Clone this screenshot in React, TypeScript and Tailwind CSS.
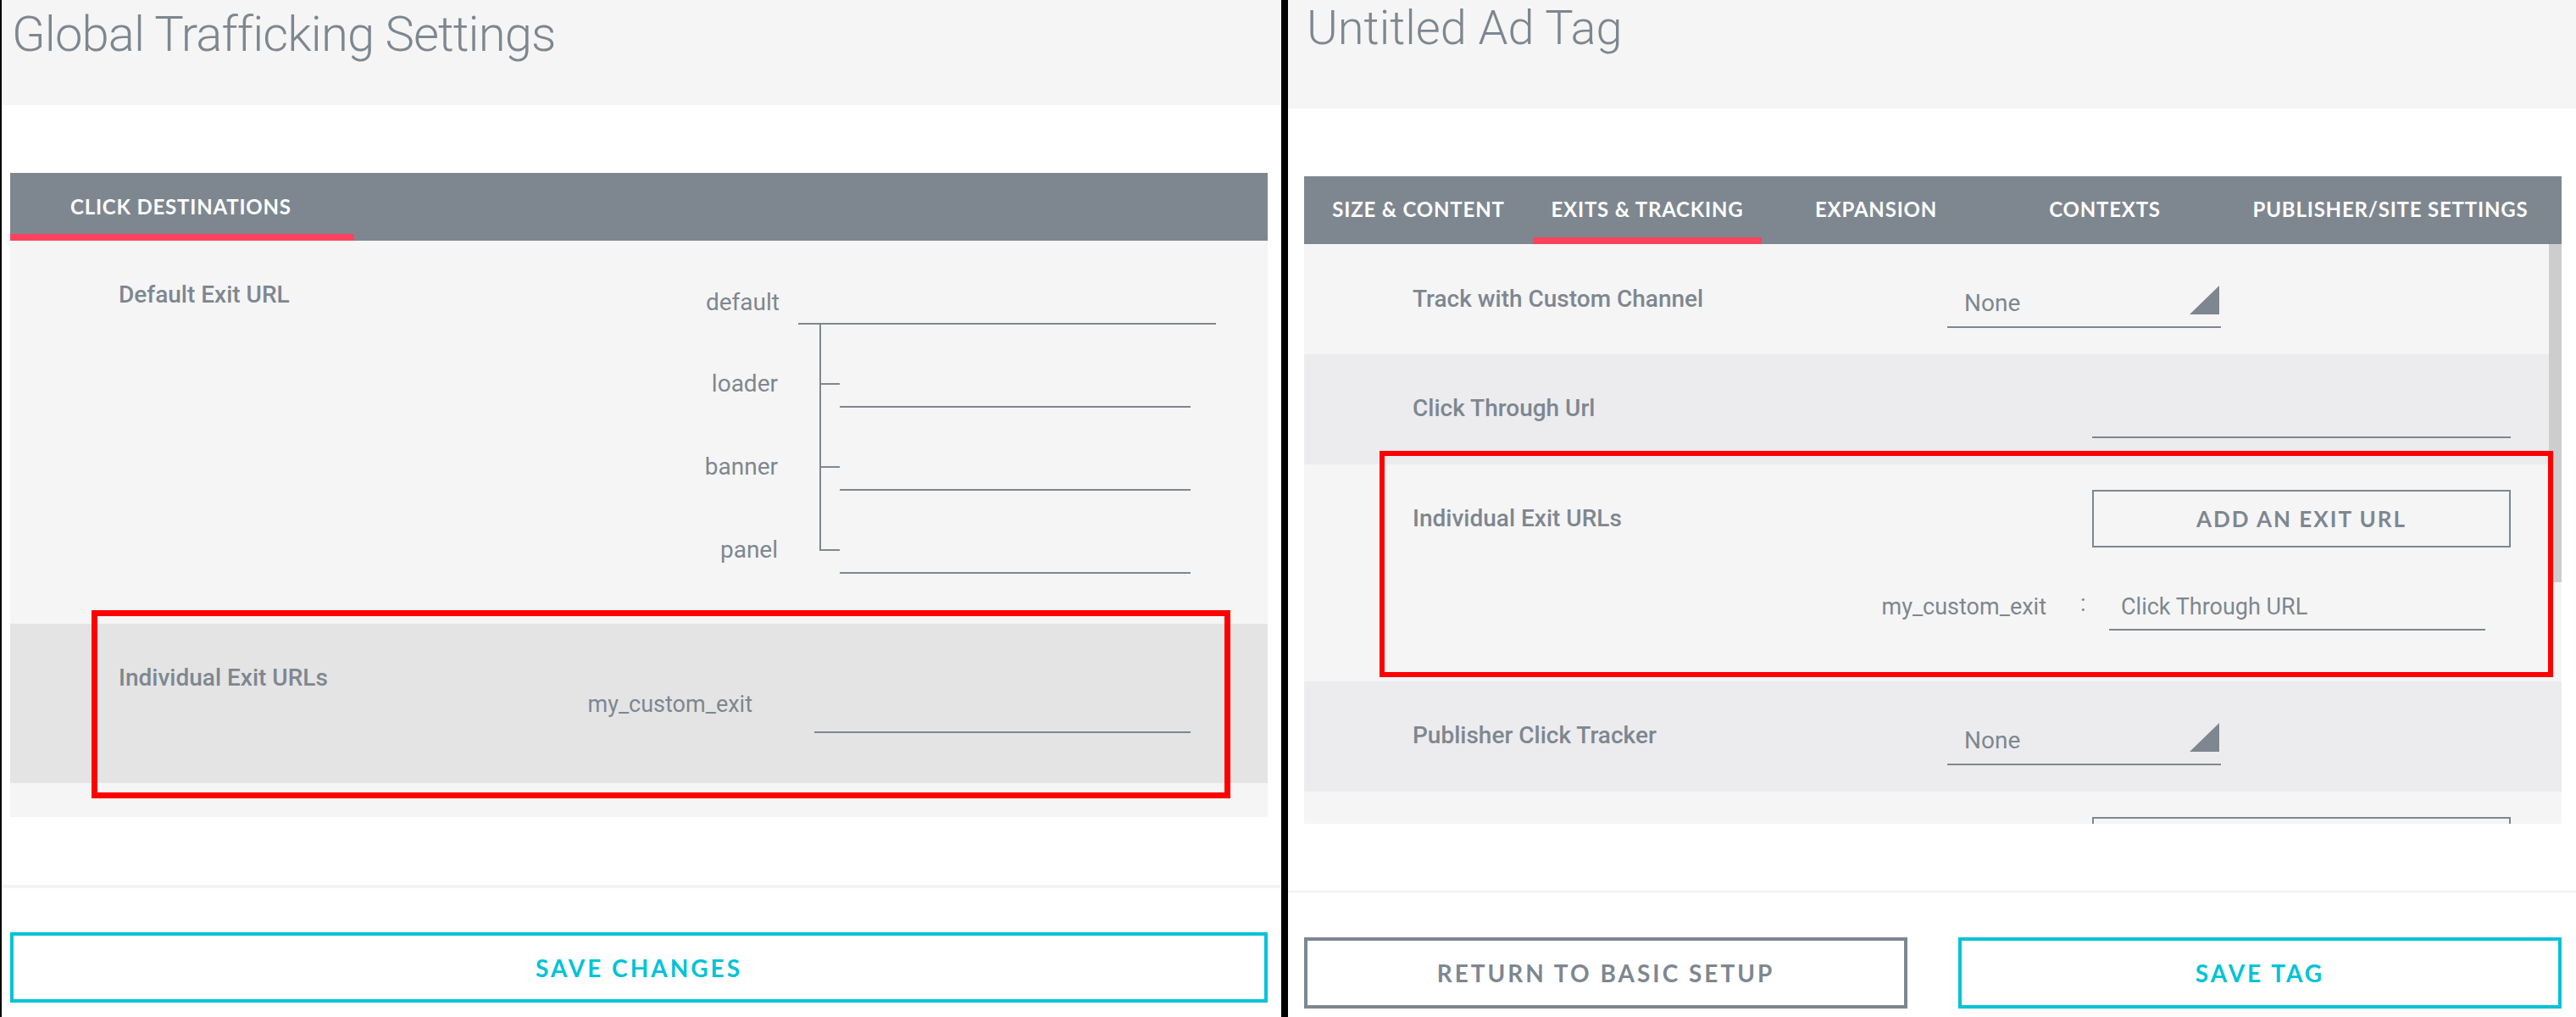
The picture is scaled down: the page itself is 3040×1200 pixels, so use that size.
const gray = "text-[#7e8790]";

function Label({ children }: { children: React.ReactNode }) {
  return (
    <span className={`text-[28px] font-medium leading-none ${gray}`}>
      {children}
    </span>
  );
}

function Select() {
  return (
    <div className="mt-[44px] w-[323px] h-[55px] border-b-2 border-[#7e8790] flex justify-between pl-[20px] pr-[2px]">
      <span className={`mt-[12px] text-[28px] leading-none ${gray}`}>None</span>
      <svg className="mt-[5px]" width="35" height="34" viewBox="0 0 35 34">
        <polygon points="35,0 35,34 0,34" fill="#7e8790" />
      </svg>
    </div>
  );
}

function TreeRow({ name, last }: { name: string; last?: boolean }) {
  return (
    <div className="flex h-[98px]">
      <div className={`w-[306px] pt-[56px] text-right text-[28px] leading-none ${gray}`}>
        {name}
      </div>
      {last ? (
        <div className="ml-[49px] w-[24px]">
          <div className="h-[71px] border-l-2 border-b-2 border-[#7e8790]" />
        </div>
      ) : (
        <div className="ml-[49px] w-[24px] border-l-2 border-[#7e8790]">
          <div className="mt-[69px] h-[2px] bg-[#7e8790]" />
        </div>
      )}
      <div className="w-[414px] border-b-2 border-[#7e8790]" />
    </div>
  );
}

function GlobalSettings() {
  return (
    <div className="relative w-[1512px] h-full border-l-2 border-black flex flex-col bg-white">
      <div className="h-[124px] bg-[#f5f5f5] pl-[12px] pt-[11px]">
        <h1 className={`text-[58px] font-light leading-none tracking-[-0.9px] ${gray}`}>
          Global Trafficking Settings
        </h1>
      </div>

      <div className="mt-[80px] ml-[10px] w-[1484px] h-[80px] bg-[#7e8790] flex">
        <div className="w-[406px] flex flex-col">
          <div className="flex-1 pt-[28px] pl-[71px] font-['Lato',sans-serif] font-bold text-[24px] leading-none tracking-[0.8px] text-white">
            CLICK DESTINATIONS
          </div>
          <div className="h-[8px] bg-[#fa435d]" />
        </div>
      </div>

      <div className="ml-[10px] w-[1484px] h-[680px] bg-[#f5f5f5] flex flex-col">
        <div className="h-[452px] flex">
          <div className="w-[600px] pl-[128px] pt-[50px]">
            <Label>Default Exit URL</Label>
          </div>
          <div className="flex flex-col">
            <div className="flex h-[99px]">
              <div className={`w-[308px] pt-[59px] text-right text-[28px] leading-none ${gray}`}>
                default
              </div>
              <div className="ml-[22px] w-[493px] border-b-2 border-[#7e8790]" />
            </div>
            <TreeRow name="loader" />
            <TreeRow name="banner" />
            <TreeRow name="panel" last />
          </div>
        </div>

        <div className="h-[188px] bg-[#e4e4e4] pt-[50px]">
          <div className="pl-[128px] leading-none">
            <Label>Individual Exit URLs</Label>
          </div>
          <div className="mt-[4px] flex">
            <div className={`w-[876px] text-right text-[27px] leading-none ${gray}`}>
              my_custom_exit
            </div>
            <div className="ml-[73px] w-[444px] h-[47px] border-b-2 border-[#7e8790]" />
          </div>
        </div>
      </div>

      <div className="mt-[80px] h-[4px] bg-[#f3f3f3]" />

      <button className="mt-[52px] ml-[10px] w-[1484px] h-[83px] border-4 border-[#00c3d6] flex items-center justify-center font-['Lato',sans-serif] font-bold text-[28px] leading-none tracking-[3px] text-[#00c3d6]">
        SAVE CHANGES
      </button>

      <div className="absolute left-[106px] top-[720px] w-[1344px] h-[222px] border-[7px] border-[#ff0000]" />
    </div>
  );
}

const tabs = ["SIZE & CONTENT", "EXITS & TRACKING", "EXPANSION", "CONTEXTS", "PUBLISHER/SITE SETTINGS"];

function AdTag() {
  return (
    <div className="relative w-[1520px] h-full flex flex-col bg-white">
      <div className="h-[128px] bg-[#f5f5f5] pl-[22px] pt-[5px]">
        <h1 className={`text-[56px] font-light leading-none ${gray}`}>Untitled Ad Tag</h1>
      </div>

      <div className="mt-[80px] ml-[19px] w-[1484px] h-[80px] bg-[#7e8790] flex">
        {tabs.map((t, i) => (
          <div key={t} className={`${i === 4 ? "flex-1" : "w-[270px]"} flex flex-col`}>
            <div className="flex-1 pt-[27px] text-center font-['Lato',sans-serif] font-bold text-[24px] leading-none tracking-[0.8px] text-white">
              {t}
            </div>
            <div className={`h-[8px] ${i === 1 ? "bg-[#fa435d]" : ""}`} />
          </div>
        ))}
      </div>

      <div className="relative ml-[19px] w-[1484px] h-[684px] bg-[#f5f5f5] overflow-hidden flex flex-col">
        <div className="h-[130px] shrink-0 flex">
          <div className="w-[759px] pl-[128px] pt-[51px]">
            <Label>Track with Custom Channel</Label>
          </div>
          <Select />
        </div>

        <div className="h-[130px] shrink-0 bg-[#ececee] flex">
          <div className="w-[930px] pl-[128px] pt-[50px]">
            <Label>Click Through Url</Label>
          </div>
          <div className="mt-[44px] w-[494px] h-[55px] border-b-2 border-[#7e8790]" />
        </div>

        <div className="h-[256px] shrink-0 pt-[30px]">
          <div className="flex items-start">
            <div className="w-[930px] pl-[128px] pt-[20px]">
              <Label>Individual Exit URLs</Label>
            </div>
            <button className={`w-[494px] h-[68px] border-2 border-[#7e8790] flex items-center justify-center font-['Lato',sans-serif] font-bold text-[26px] leading-none tracking-[2px] ${gray}`}>
              ADD AN EXIT URL
            </button>
          </div>
          <div className="mt-[52px] flex items-start">
            <div className={`w-[876px] pt-[5px] text-right text-[27px] leading-none ${gray}`}>
              my_custom_exit
            </div>
            <div className={`w-[74px] pl-[40px] pt-[1px] text-[27px] leading-none ${gray}`}>:</div>
            <div className={`w-[444px] h-[46px] border-b-2 border-[#7e8790] pl-[14px] pt-[5px] text-[27px] leading-none ${gray}`}>
              Click Through URL
            </div>
          </div>
        </div>

        <div className="h-[130px] shrink-0 bg-[#ececee] flex">
          <div className="w-[759px] pl-[128px] pt-[50px]">
            <Label>Publisher Click Tracker</Label>
          </div>
          <Select />
        </div>

        <div className="h-[130px] shrink-0 pt-[30px] flex">
          <div className="w-[930px]" />
          <div className="w-[494px] h-[68px] border-2 border-[#7e8790]" />
        </div>

        <div className="absolute right-0 top-0 w-[15px] h-[399px] bg-[#cdcdcd]" />
      </div>

      <div className="mt-[79px] h-[2px] bg-[#f0f0f0]" />

      <div className="mt-[53px] ml-[19px] flex gap-[60px]">
        <button className={`w-[712px] h-[84px] border-4 border-[#7e8790] flex items-center justify-center font-['Lato',sans-serif] font-bold text-[28px] leading-none tracking-[3px] ${gray}`}>
          RETURN TO BASIC SETUP
        </button>
        <button className="w-[712px] h-[84px] border-4 border-[#00c3d6] flex items-center justify-center font-['Lato',sans-serif] font-bold text-[28px] leading-none tracking-[3px] text-[#00c3d6]">
          SAVE TAG
        </button>
      </div>

      <div className="absolute left-[108px] top-[532px] w-[1385px] h-[267px] border-[6px] border-[#ff0000]" />
    </div>
  );
}

export default function App() {
  return (
    <div className="flex w-[3040px] h-[1200px] bg-white font-['Roboto',sans-serif]">
      <GlobalSettings />
      <div className="w-[8px] h-full bg-black" />
      <AdTag />
    </div>
  );
}
